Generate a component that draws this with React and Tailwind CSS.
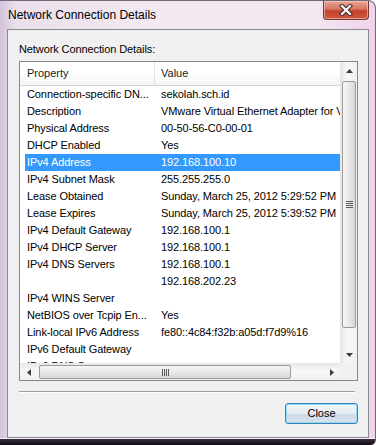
import React from "react";

const rows = [
  ["Connection-specific DN...", "sekolah.sch.id"],
  ["Description", "VMware Virtual Ethernet Adapter for VMnet8"],
  ["Physical Address", "00-50-56-C0-00-01"],
  ["DHCP Enabled", "Yes"],
  ["IPv4 Address", "192.168.100.10"],
  ["IPv4 Subnet Mask", "255.255.255.0"],
  ["Lease Obtained", "Sunday, March 25, 2012 5:29:52 PM"],
  ["Lease Expires", "Sunday, March 25, 2012 5:39:52 PM"],
  ["IPv4 Default Gateway", "192.168.100.1"],
  ["IPv4 DHCP Server", "192.168.100.1"],
  ["IPv4 DNS Servers", "192.168.100.1"],
  ["", "192.168.202.23"],
  ["IPv4 WINS Server", ""],
  ["NetBIOS over Tcpip En...", "Yes"],
  ["Link-local IPv6 Address", "fe80::4c84:f32b:a05d:f7d9%16"],
  ["IPv6 Default Gateway", ""],
  ["IPv6 DNS Servers", ""],
];

const SELECTED = 4;

function Arrow({ dir }) {
  const points = {
    up: "0,4 3.5,0 7,4",
    down: "0,0 3.5,4 7,0",
    left: "4,0 0,3.5 4,7",
    right: "0,0 4,3.5 0,7",
  }[dir];
  const vertical = dir === "up" || dir === "down";
  return (
    <svg width={vertical ? 7 : 4} height={vertical ? 4 : 7} className="block">
      <polygon points={points} fill="#3c3c3c" />
    </svg>
  );
}

function VerticalScrollbar() {
  return (
    <div className="flex h-full w-[17px] flex-col border-l border-[#e6e6e6] bg-[linear-gradient(90deg,#e9e9e9,#f7f7f7_40%,#f0f0f0)]">
      <div className="flex h-[17px] items-center justify-center">
        <Arrow dir="up" />
      </div>
      <div className="flex-1 px-[1px] pb-[2px] pt-[2px]">
        <div className="flex h-[247px] items-center justify-center rounded-[2px] border border-[#9a9a9a] bg-[linear-gradient(90deg,#f6f6f6,#e9e9e9_50%,#d6d6d6)]">
          <div className="flex flex-col gap-[1px]">
            <div className="h-[1px] w-[7px] bg-[#5b5b5b]" />
            <div className="h-[1px] w-[7px] bg-[#5b5b5b]" />
            <div className="h-[1px] w-[7px] bg-[#5b5b5b]" />
            <div className="h-[1px] w-[7px] bg-[#5b5b5b]" />
          </div>
        </div>
      </div>
      <div className="flex h-[17px] items-center justify-center">
        <Arrow dir="down" />
      </div>
    </div>
  );
}

function HorizontalScrollbar() {
  return (
    <div className="flex h-[17px] w-[320px] border-t border-[#e6e6e6] bg-[linear-gradient(180deg,#e9e9e9,#f7f7f7_40%,#f0f0f0)]">
      <div className="flex w-[17px] items-center justify-center">
        <Arrow dir="left" />
      </div>
      <div className="flex-1 py-[1px] pl-[2px] pr-[2px]">
        <div className="flex h-full w-[252px] items-center justify-center rounded-[2px] border border-[#9a9a9a] bg-[linear-gradient(180deg,#f6f6f6,#e9e9e9_50%,#d6d6d6)]">
          <div className="flex gap-[1px]">
            <div className="h-[7px] w-[1px] bg-[#5b5b5b]" />
            <div className="h-[7px] w-[1px] bg-[#5b5b5b]" />
            <div className="h-[7px] w-[1px] bg-[#5b5b5b]" />
            <div className="h-[7px] w-[1px] bg-[#5b5b5b]" />
          </div>
        </div>
      </div>
      <div className="flex w-[17px] items-center justify-center">
        <Arrow dir="right" />
      </div>
    </div>
  );
}

function CloseGlyph() {
  return (
    <svg width="14" height="12" viewBox="0 0 14 12" className="block">
      <path d="M3 2 L11 10 M11 2 L3 10" stroke="#3a2a2a" strokeWidth="4.2" strokeLinecap="square" />
      <path d="M3 2 L11 10 M11 2 L3 10" stroke="#ffffff" strokeWidth="2.2" strokeLinecap="square" />
    </svg>
  );
}

export default function App() {
  return (
    <div
      className="flex h-[445px] w-[376px] flex-col overflow-hidden rounded-tr-[8px] rounded-br-[5px] border-r border-t border-[#6f6a74] bg-[linear-gradient(90deg,#d3c3da_0%,#eadfea_4%,#f2e9f2_40%,#f2e6f1_85%,#f0d2ec_100%)] text-black"
      style={{ fontFamily: '"Liberation Sans", Arial, sans-serif' }}
    >
      <div className="flex h-[28px] shrink-0 items-start justify-between">
        <span className="self-center pl-[8px] text-[12px]">Network Connection Details</span>
        <div className="mr-[6px] flex h-[19px] w-[46px] items-center justify-center rounded-b-[4px] border border-t-0 border-[#6e3a32] bg-[linear-gradient(180deg,#e8a596_0%,#d77562_45%,#c2412b_55%,#d0593f_100%)] shadow-[inset_0_0_0_1px_rgba(255,220,210,0.55)]">
          <CloseGlyph />
        </div>
      </div>

      <div className="ml-[7px] h-[409px] w-[362px] shrink-0 border border-[#8a8a8e] bg-[#f0f0f0]">
        <div className="flex w-[339px] flex-col pl-[11px] pt-[12px] box-content">
          <p className="h-[15px] text-[11px] leading-[15px] tracking-[-0.1px]">Network Connection Details:</p>

          <div className="mt-[4px] flex h-[320px] w-[339px] flex-col border border-[#828790] bg-white">
            <div className="flex h-[301px]">
              <div className="flex w-[320px] flex-col overflow-hidden">
                <div className="flex h-[24px] shrink-0 items-center border-b border-[#d5d5d5] bg-[linear-gradient(180deg,#ffffff_0%,#ffffff_50%,#f3f4f6_100%)] text-[11px] text-[#1b1b1b]">
                  <div className="flex h-full w-[135px] shrink-0 items-center border-r border-[#dfe3e8] pl-[7px]">Property</div>
                  <div className="pl-[6px]">Value</div>
                </div>
                <div className="h-[277px] overflow-hidden">
                  {rows.map(([prop, value], i) => {
                    const selected = i === SELECTED;
                    return (
                      <div key={i} className="flex h-[17px] items-center">
                        <div
                          className={`ml-[5px] flex h-full w-[315px] items-center whitespace-nowrap text-[11px] tracking-[-0.1px] ${
                            selected ? "bg-[#3399ff] text-white" : "text-black"
                          }`}
                        >
                          <span className="w-[130px] shrink-0 overflow-hidden pl-[2px]">{prop}</span>
                          <span className="pl-[6px]">{value}</span>
                        </div>
                      </div>
                    );
                  })}
                </div>
              </div>
              <VerticalScrollbar />
            </div>
            <div className="flex">
              <HorizontalScrollbar />
              <div className="h-[17px] w-[17px] bg-[#f0f0f0]" />
            </div>
          </div>

          <div className="mt-[10px] h-[2px] w-[336px] border-b border-t border-b-white border-t-[#a0a0a0]" />

          <div className="mt-[10px] flex justify-end">
            <button className="flex h-[21px] w-[73px] items-center justify-center rounded-[3px] border border-[#3c7fb1] bg-[linear-gradient(180deg,#f1f5f9_0%,#e3ebf2_50%,#cfdbe6_52%,#d6e2ec_100%)] text-[11px] shadow-[inset_0_0_0_1px_#8fdcf7]">
              Close
            </button>
          </div>
        </div>
      </div>

      <div className="mt-auto h-[7px] shrink-0 border-t border-[#f6f0f6] bg-[linear-gradient(180deg,#3a2c3e,#120c14)]" />
    </div>
  );
}
